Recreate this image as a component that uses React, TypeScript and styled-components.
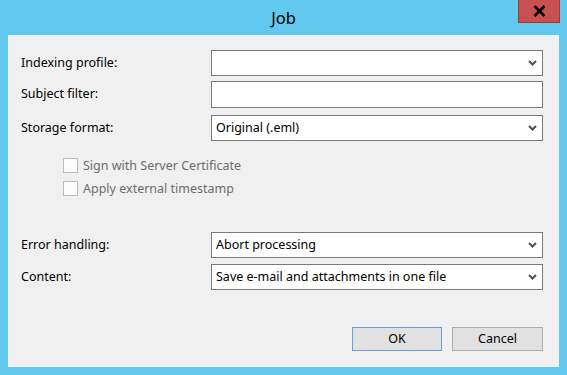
import React from "react"
import styled, { createGlobalStyle } from "styled-components"

const GlobalStyle = createGlobalStyle`
  html, body {
    margin: 0;
    padding: 0;
    background: #63c8ed;
  }
  body {
    font-family: "Noto Sans", "Segoe UI", sans-serif;
    font-size: 12.5px;
    color: #000;
  }
`

const Window = styled.div`
  width: 567px;
  height: 375px;
  background: #63c8ed;
  display: flex;
  flex-direction: column;
  box-sizing: border-box;
`

const TitleBar = styled.div`
  height: 35px;
  display: grid;
  grid-template-columns: 1fr auto 1fr;
  flex-shrink: 0;
`

const Title = styled.div`
  grid-column: 2;
  align-self: center;
  font-size: 16.5px;
  padding-bottom: 1px;
  color: #000;
`

const Caption = styled.div`
  grid-column: 3;
  display: flex;
  justify-content: flex-end;
  align-items: flex-start;
  padding-right: 7px;
`

const CloseButton = styled.div`
  width: 42px;
  height: 23px;
  box-sizing: border-box;
  background: #c75050;
  border: 1px solid #9a3b3b;
  border-top: none;
  display: flex;
  align-items: center;
  justify-content: center;
`

const Client = styled.div`
  margin: 0 8px 8px 8px;
  flex: 1;
  background: #f0f0f0;
  padding: 15px 16px 16px 13px;
  display: flex;
  flex-direction: column;
  box-sizing: border-box;
`

const Row = styled.div<{ $gap?: number }>`
  display: grid;
  grid-template-columns: 190px 1fr;
  align-items: center;
  margin-top: ${(p) => p.$gap ?? 0}px;
`

const Label = styled.div`
  padding-bottom: 2px;
`

const Field = styled.div<{ $h?: number }>`
  height: ${(p) => p.$h ?? 26}px;
  box-sizing: border-box;
  border: 1px solid #7a7a7a;
  background: #fff;
  display: flex;
  align-items: center;
  padding: 0 5px 1px 4px;
`

const FieldText = styled.div`
  flex: 1;
  white-space: nowrap;
`

const Checks = styled.div`
  margin-top: 13px;
  padding-left: 42px;
  display: flex;
  flex-direction: column;
`

const CheckRow = styled.div`
  height: 23px;
  display: flex;
  align-items: center;
  gap: 5px;
  color: #6d6d6d;
`

const Box = styled.div`
  width: 15px;
  height: 15px;
  box-sizing: border-box;
  border: 1px solid #bcbcbc;
  background: #fcfcfc;
`

const Buttons = styled.div`
  margin-top: auto;
  display: flex;
  justify-content: flex-end;
  gap: 10px;
`

const Button = styled.div<{ $default?: boolean }>`
  width: ${(p) => (p.$default ? 90 : 91)}px;
  height: 24px;
  box-sizing: border-box;
  background: #e1e1e1;
  border: 1px solid ${(p) => (p.$default ? "#6a9fd6" : "#adadad")};
  display: flex;
  align-items: center;
  justify-content: center;
  padding-bottom: 1px;
`

const Chevron = () => (
  <svg width="9" height="6" viewBox="0 0 9 6">
    <path d="M1 1 L4.5 4.5 L8 1" fill="none" stroke="#505050" strokeWidth="2" />
  </svg>
)

const CloseGlyph = () => (
  <svg width="13" height="12" viewBox="0 0 13 12">
    <path d="M1.5 1 L11.5 11 M11.5 1 L1.5 11" stroke="#000" strokeWidth="2.6" />
  </svg>
)

const Combo = ({ value }: { value?: string }) => (
  <Field>
    <FieldText>{value}</FieldText>
    <Chevron />
  </Field>
)

const Check = ({ label }: { label: string }) => (
  <CheckRow>
    <Box />
    <span>{label}</span>
  </CheckRow>
)

const App = () => {
  return (
    <>
      <GlobalStyle />
      <Window>
        <TitleBar>
          <Title>Job</Title>
          <Caption>
            <CloseButton>
              <CloseGlyph />
            </CloseButton>
          </Caption>
        </TitleBar>
        <Client>
          <Row>
            <Label>Indexing profile:</Label>
            <Combo />
          </Row>
          <Row $gap={5}>
            <Label>Subject filter:</Label>
            <Field $h={27} />
          </Row>
          <Row $gap={7}>
            <Label>Storage format:</Label>
            <Combo value="Original (.eml)" />
          </Row>
          <Checks>
            <Check label="Sign with Server Certificate" />
            <Check label="Apply external timestamp" />
          </Checks>
          <Row $gap={32}>
            <Label>Error handling:</Label>
            <Combo value="Abort processing" />
          </Row>
          <Row $gap={6}>
            <Label>Content:</Label>
            <Combo value="Save e-mail and attachments in one file" />
          </Row>
          <Buttons>
            <Button $default>OK</Button>
            <Button>Cancel</Button>
          </Buttons>
        </Client>
      </Window>
    </>
  )
}

export default App
